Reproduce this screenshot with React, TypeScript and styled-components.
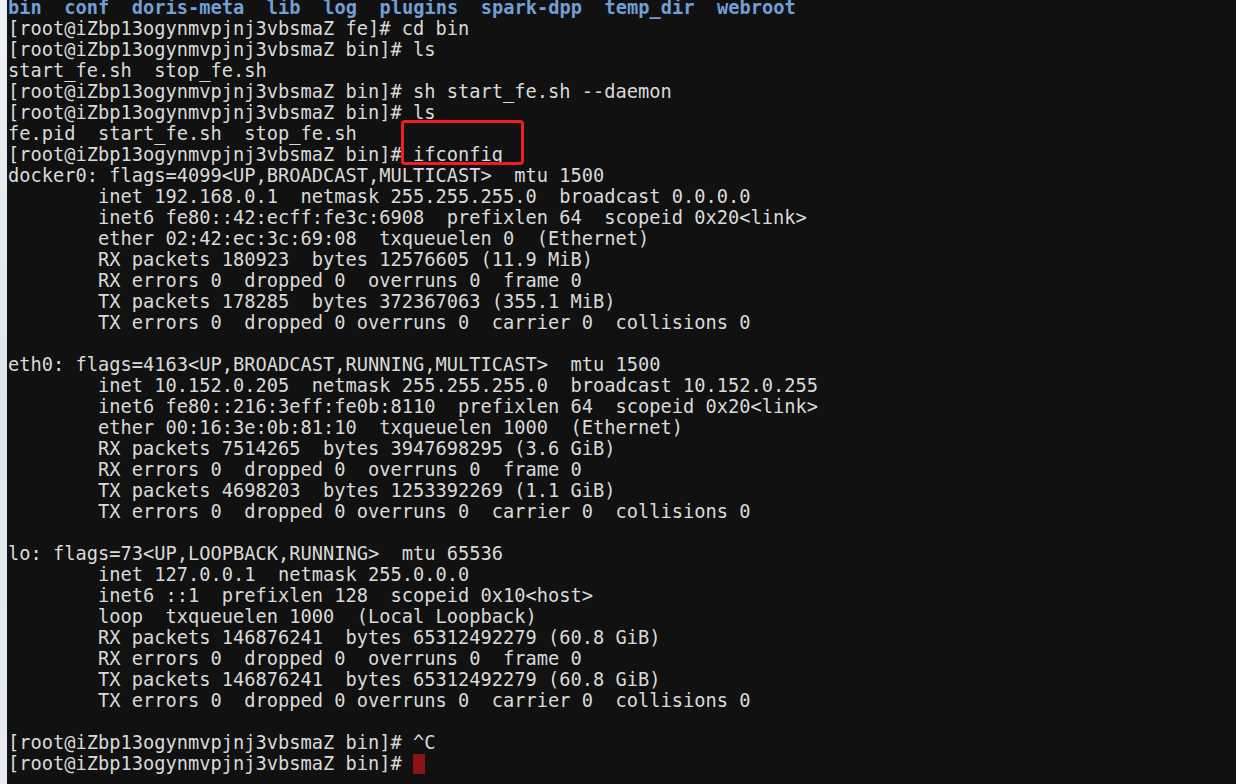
import React from "react";
import styled, { createGlobalStyle } from "styled-components";

const Global = createGlobalStyle`
  html, body { margin: 0; padding: 0; background: #e3e8ed; }
  body { overflow: hidden; }
`;

const Page = styled.div`
  display: flex;
  width: 1236px;
  height: 784px;
  overflow: hidden;
`;

const Edge = styled.div`
  width: 7px;
  flex: none;
  background: linear-gradient(180deg, #eef1f4 0%, #dfe5eb 50%, #e8ecf0 100%);
`;

const Screen = styled.div`
  flex: 1;
  background: #111111;
  overflow: hidden;
  padding-left: 1px;
`;

const Lines = styled.div`
  margin-top: -3px;
  font-family: "DejaVu Sans Mono", "Liberation Mono", monospace;
  font-size: 18.7px;
  line-height: 21px;
  color: #dadada;
  white-space: pre;
`;

const Line = styled.div`
  height: 21px;
`;

const Dir = styled.span`
  color: #729fd6;
  font-weight: bold;
`;

const Marked = styled.span`
  position: relative;
  &::after {
    content: "";
    position: absolute;
    left: -12px;
    top: -24px;
    width: 117px;
    height: 39px;
    border: 3px solid #f21d1d;
    border-radius: 4px;
  }
`;

const Cursor = styled.span`
  display: inline-block;
  width: 12px;
  height: 20px;
  background: #8c1515;
  vertical-align: -4px;
`;

const P = "[root@iZbp13ogynmvpjnj3vbsmaZ bin]# ";

const dirs = ["bin", "conf", "doris-meta", "lib", "log", "plugins", "spark-dpp", "temp_dir", "webroot"];

const body: string[] = [
  "docker0: flags=4099<UP,BROADCAST,MULTICAST>  mtu 1500",
  "        inet 192.168.0.1  netmask 255.255.255.0  broadcast 0.0.0.0",
  "        inet6 fe80::42:ecff:fe3c:6908  prefixlen 64  scopeid 0x20<link>",
  "        ether 02:42:ec:3c:69:08  txqueuelen 0  (Ethernet)",
  "        RX packets 180923  bytes 12576605 (11.9 MiB)",
  "        RX errors 0  dropped 0  overruns 0  frame 0",
  "        TX packets 178285  bytes 372367063 (355.1 MiB)",
  "        TX errors 0  dropped 0 overruns 0  carrier 0  collisions 0",
  "",
  "eth0: flags=4163<UP,BROADCAST,RUNNING,MULTICAST>  mtu 1500",
  "        inet 10.152.0.205  netmask 255.255.255.0  broadcast 10.152.0.255",
  "        inet6 fe80::216:3eff:fe0b:8110  prefixlen 64  scopeid 0x20<link>",
  "        ether 00:16:3e:0b:81:10  txqueuelen 1000  (Ethernet)",
  "        RX packets 7514265  bytes 3947698295 (3.6 GiB)",
  "        RX errors 0  dropped 0  overruns 0  frame 0",
  "        TX packets 4698203  bytes 1253392269 (1.1 GiB)",
  "        TX errors 0  dropped 0 overruns 0  carrier 0  collisions 0",
  "",
  "lo: flags=73<UP,LOOPBACK,RUNNING>  mtu 65536",
  "        inet 127.0.0.1  netmask 255.0.0.0",
  "        inet6 ::1  prefixlen 128  scopeid 0x10<host>",
  "        loop  txqueuelen 1000  (Local Loopback)",
  "        RX packets 146876241  bytes 65312492279 (60.8 GiB)",
  "        RX errors 0  dropped 0  overruns 0  frame 0",
  "        TX packets 146876241  bytes 65312492279 (60.8 GiB)",
  "        TX errors 0  dropped 0 overruns 0  carrier 0  collisions 0",
  "",
];

export default function App() {
  return (
    <>
      <Global />
      <Page>
        <Edge />
        <Screen>
          <Lines>
            <Line>
              {dirs.map((d, i) => (
                <React.Fragment key={d}>
                  {i > 0 ? "  " : ""}
                  <Dir>{d}</Dir>
                </React.Fragment>
              ))}
            </Line>
            <Line>{"[root@iZbp13ogynmvpjnj3vbsmaZ fe]# cd bin"}</Line>
            <Line>{P + "ls"}</Line>
            <Line>{"start_fe.sh  stop_fe.sh"}</Line>
            <Line>{P + "sh start_fe.sh --daemon"}</Line>
            <Line>{P + "ls"}</Line>
            <Line>{"fe.pid  start_fe.sh  stop_fe.sh"}</Line>
            <Line>
              {P}
              <Marked>ifconfig</Marked>
            </Line>
            {body.map((t, i) => (
              <Line key={i}>{t}</Line>
            ))}
            <Line>{P + "^C"}</Line>
            <Line>
              {P}
              <Cursor />
            </Line>
          </Lines>
        </Screen>
      </Page>
    </>
  );
}
